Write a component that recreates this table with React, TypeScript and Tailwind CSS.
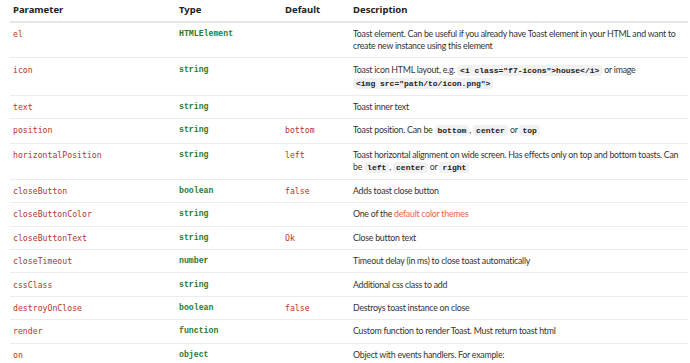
import React from 'react'

type Row = {
  name: string
  type: string
  def?: string
  desc: React.ReactNode
}

function Code({ children }: { children: React.ReactNode }) {
  return (
    <code className="whitespace-nowrap rounded-[3px] bg-[#f1f1f1] px-[3px] py-[1px] font-['Liberation_Mono',monospace] text-[8px] font-bold tracking-normal text-[#222]">
      {children}
    </code>
  )
}

const rows: Row[] = [
  {
    name: 'el',
    type: 'HTMLElement',
    desc: 'Toast element. Can be useful if you already have Toast element in your HTML and want to create new instance using this element',
  },
  {
    name: 'icon',
    type: 'string',
    desc: (
      <>
        Toast icon HTML layout, e.g. <Code>{'<i class="f7-icons">house</i>'}</Code> or image{' '}
        <Code>{'<img src="path/to/icon.png">'}</Code>
      </>
    ),
  },
  { name: 'text', type: 'string', desc: 'Toast inner text' },
  {
    name: 'position',
    type: 'string',
    def: 'bottom',
    desc: (
      <>
        Toast position. Can be <Code>bottom</Code>, <Code>center</Code> or <Code>top</Code>
      </>
    ),
  },
  {
    name: 'horizontalPosition',
    type: 'string',
    def: 'left',
    desc: (
      <>
        Toast horizontal alignment on wide screen. Has effects only on top and bottom toasts. Can be{' '}
        <Code>left</Code>, <Code>center</Code> or <Code>right</Code>
      </>
    ),
  },
  { name: 'closeButton', type: 'boolean', def: 'false', desc: 'Adds toast close button' },
  {
    name: 'closeButtonColor',
    type: 'string',
    desc: (
      <>
        One of the <a className="text-[#f2613f]">default color themes</a>
      </>
    ),
  },
  { name: 'closeButtonText', type: 'string', def: 'Ok', desc: 'Close button text' },
  { name: 'closeTimeout', type: 'number', desc: 'Timeout delay (in ms) to close toast automatically' },
  { name: 'cssClass', type: 'string', desc: 'Additional css class to add' },
  { name: 'destroyOnClose', type: 'boolean', def: 'false', desc: 'Destroys toast instance on close' },
  { name: 'render', type: 'function', desc: 'Custom function to render Toast. Must return toast html' },
  { name: 'on', type: 'object', desc: 'Object with events handlers. For example:' },
]

export default function App() {
  return (
    <div className="h-[363px] w-[690px] overflow-hidden bg-white pl-[10px] pr-[2px] font-['Noto_Sans',sans-serif] text-[#222]">
      <table className="w-full table-fixed border-collapse text-left">
        <colgroup>
          <col className="w-[166px]" />
          <col className="w-[106px]" />
          <col className="w-[68px]" />
          <col />
        </colgroup>
        <thead>
          <tr className="border-b-2 border-[#e6e6e6] text-[9.5px] font-bold">
            <th className="h-[22px] pl-[3px] align-middle">Parameter</th>
            <th className="pl-[3px] align-middle">Type</th>
            <th className="pl-[3px] align-middle">Default</th>
            <th className="pl-[3px] align-middle">Description</th>
          </tr>
        </thead>
        <tbody>
          {rows.map((r) => (
            <tr key={r.name} className="border-b border-[#ececec] align-top">
              <td className="py-[5.2px] pl-[3px] font-['DejaVu_Sans_Mono',monospace] text-[8.2px] leading-[12px] text-[#b8352a]">
                {r.name}
              </td>
              <td className="py-[5.2px] pl-[3px] font-['Liberation_Mono',monospace] text-[8.2px] font-bold leading-[12px] text-[#2a7a2e]">
                {r.type}
              </td>
              <td className="py-[5.2px] pl-[3px] font-['DejaVu_Sans_Mono',monospace] text-[8.2px] leading-[12px] text-[#b8352a]">
                {r.def}
              </td>
              <td className="py-[5.2px] pl-[3px] pr-[2px] font-['Lato',sans-serif] text-[8.8px] leading-[12px] tracking-[-0.25px] text-[#333]">
                {r.desc}
              </td>
            </tr>
          ))}
        </tbody>
      </table>
    </div>
  )
}
